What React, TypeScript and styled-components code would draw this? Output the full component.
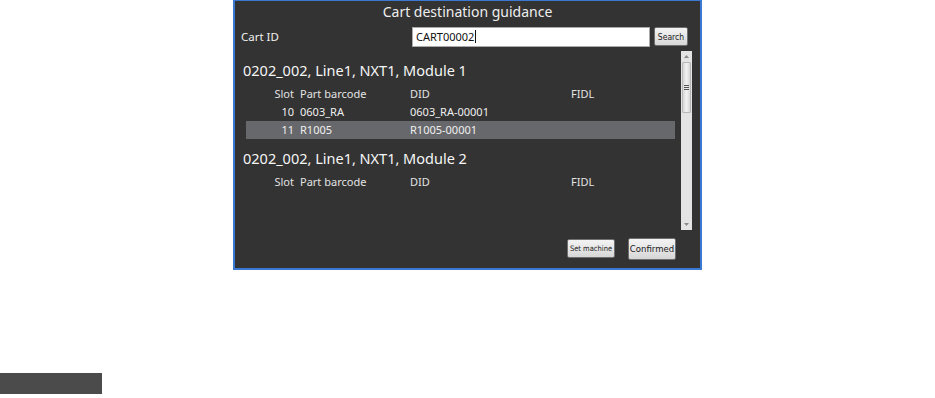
import styled, { createGlobalStyle } from 'styled-components';

const MODULES = [
	{
		title: '0202_002, Line1, NXT1, Module 1',
		rows: [
			{ slot: '10', part: '0603_RA', did: '0603_RA-00001', fidl: '', selected: false },
			{ slot: '11', part: 'R1005', did: 'R1005-00001', fidl: '', selected: true },
		],
	},
	{
		title: '0202_002, Line1, NXT1, Module 2',
		rows: [],
	},
];

const GlobalStyle = createGlobalStyle`
	body {
		margin: 0;
		background: #ffffff;
		font-family: "Noto Sans", "Open Sans", sans-serif;
	}
`;

const Page = styled.div`
	width: 935px;
	height: 398px;
	display: flex;
	flex-direction: column;
`;

const Panel = styled.section`
	margin-left: 233px;
	width: 469px;
	height: 270px;
	box-sizing: border-box;
	background: #333333;
	border: 2px solid #3b78d2;
	border-top-width: 1px;
	display: flex;
	flex-direction: column;
	color: #f0f0f0;
`;

const Title = styled.h1`
	margin: 0;
	height: 23px;
	line-height: 22px;
	font-size: 14px;
	font-weight: 400;
	text-align: center;
	color: #eeeeee;
`;

const SearchRow = styled.div`
	display: flex;
	align-items: center;
	height: 19px;
	margin-top: 3px;
	padding: 0 12px 0 6px;
	gap: 4px;
`;

const Label = styled.span`
	flex: 1;
	font-size: 11.5px;
`;

const Input = styled.div`
	box-sizing: border-box;
	width: 238px;
	height: 20px;
	background: #fff;
	border: 1px solid #a9a9a9;
	color: #111;
	font-size: 11px;
	line-height: 17px;
	padding-left: 3px;
	display: flex;
	align-items: center;
`;

const Caret = styled.span`
	display: inline-block;
	width: 1px;
	height: 13px;
	background: #111;
	margin-left: 1px;
`;

const Button = styled.button<{ $size: number; $width: number }>`
	box-sizing: border-box;
	width: ${(p) => p.$width}px;
	height: ${(p) => (p.$size > 9 ? 22 : 19)}px;
	padding: 0;
	border: 1px solid #6f6f6f;
	border-radius: 2px;
	background: linear-gradient(#f3f3f3, #e6e6e6 50%, #d6d6d6);
	color: #1a1a1a;
	font-family: "DejaVu Sans Condensed", "DejaVu Sans", sans-serif;
	font-size: ${(p) => p.$size}px;
	white-space: nowrap;
`;

const List = styled.div`
	display: flex;
	margin: 5px 8px 0 6px;
	height: 179px;
`;

const ListContent = styled.div`
	flex: 1;
	overflow: hidden;
	padding-top: 10px;
`;

const Module = styled.div`
	& + & {
		margin-top: 10px;
	}
`;

const ModuleTitle = styled.h2`
	margin: 0 0 4px 2px;
	height: 20px;
	line-height: 19px;
	font-size: 14.5px;
	font-weight: 400;
	color: #f6f6f6;
	white-space: nowrap;
`;

const Row = styled.div<{ $selected?: boolean; $header?: boolean }>`
	display: grid;
	grid-template-columns: 54px 110px 161px 1fr;
	height: 18px;
	line-height: 18px;
	margin: 0 3px 0 5px;
	font-size: 11px;
	color: ${(p) => (p.$header ? '#e2e2e2' : '#efefef')};
	background: ${(p) => (p.$selected ? '#67686b' : 'transparent')};
	white-space: nowrap;
`;

const Slot = styled.span`
	text-align: right;
	padding-right: 6px;
`;

const Cell = styled.span``;

const Scrollbar = styled.div`
	width: 11px;
	margin-left: 3px;
	background: #e4e4e4;
	display: flex;
	flex-direction: column;
	align-items: center;
`;

const Arrow = styled.div`
	height: 11px;
	display: flex;
	align-items: center;
	justify-content: center;
`;

const Thumb = styled.div`
	box-sizing: border-box;
	width: 9px;
	height: 51px;
	border: 1px solid #b8b8b8;
	border-radius: 1px;
	background: linear-gradient(90deg, #d6d6d6, #f2f2f2 50%, #d6d6d6);
	display: flex;
	flex-direction: column;
	align-items: center;
	justify-content: center;
	gap: 1px;
`;

const Grip = styled.div`
	width: 5px;
	height: 1px;
	background: #555;
`;

const Track = styled.div`
	flex: 1;
`;

const Footer = styled.div`
	display: flex;
	justify-content: flex-end;
	align-items: center;
	gap: 13px;
	padding: 0 24px 0 0;
	margin-top: 8px;
	height: 21px;
`;

const GrayBar = styled.div`
	margin-top: 103px;
	width: 102px;
	height: 21px;
	background: #4b4b4b;
`;

export default function App() {
	return (
		<>
			<GlobalStyle />
			<Page>
				<Panel>
					<Title>Cart destination guidance</Title>
					<SearchRow>
						<Label>Cart ID</Label>
						<Input>
							CART00002
							<Caret />
						</Input>
						<Button $size={8.5} $width={34}>
							Search
						</Button>
					</SearchRow>
					<List>
						<ListContent>
							{MODULES.map((module) => (
								<Module key={module.title}>
									<ModuleTitle>{module.title}</ModuleTitle>
									<Row $header>
										<Slot>Slot</Slot>
										<Cell>Part barcode</Cell>
										<Cell>DID</Cell>
										<Cell>FIDL</Cell>
									</Row>
									{module.rows.map((row) => (
										<Row key={row.slot} $selected={row.selected}>
											<Slot>{row.slot}</Slot>
											<Cell>{row.part}</Cell>
											<Cell>{row.did}</Cell>
											<Cell>{row.fidl}</Cell>
										</Row>
									))}
								</Module>
							))}
						</ListContent>
						<Scrollbar>
							<Arrow>
								<svg width="5" height="3" viewBox="0 0 5 3">
									<path d="M2.5 0 L5 3 L0 3 Z" fill="#8a8a8a" />
								</svg>
							</Arrow>
							<Thumb>
								<Grip />
								<Grip />
								<Grip />
							</Thumb>
							<Track />
							<Arrow>
								<svg width="5" height="3" viewBox="0 0 5 3">
									<path d="M0 0 L5 0 L2.5 3 Z" fill="#8a8a8a" />
								</svg>
							</Arrow>
						</Scrollbar>
					</List>
					<Footer>
						<Button $size={7.5} $width={48}>
							Set machine
						</Button>
						<Button $size={9.5} $width={48}>
							Confirmed
						</Button>
					</Footer>
				</Panel>
				<GrayBar />
			</Page>
		</>
	);
}
